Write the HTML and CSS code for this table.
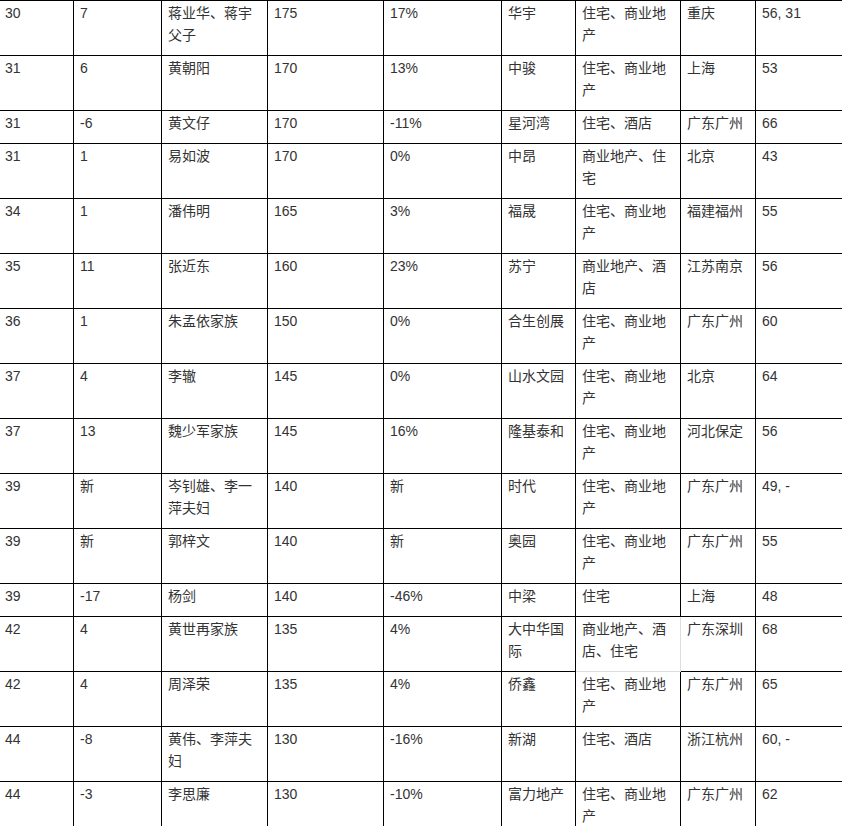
FILE: index.html
```html
<!DOCTYPE html>
<html lang="zh-CN">
<head>
<meta charset="utf-8">
<title>富豪榜</title>
<link rel="stylesheet" href="styles.css">
</head>
<body>
<table class="rank">
<colgroup>
<col class="c1"><col class="c2"><col class="c3"><col class="c4"><col class="c5"><col class="c6"><col class="c7"><col class="c8"><col class="c9">
</colgroup>
<tbody>
<tr><td>30</td><td>7</td><td>蒋业华、蒋宇父子</td><td>175</td><td>17%</td><td>华宇</td><td>住宅、商业地产</td><td>重庆</td><td>56, 31</td></tr>
<tr><td>31</td><td>6</td><td>黄朝阳</td><td>170</td><td>13%</td><td>中骏</td><td>住宅、商业地产</td><td>上海</td><td>53</td></tr>
<tr><td>31</td><td>-6</td><td>黄文仔</td><td>170</td><td>-11%</td><td>星河湾</td><td>住宅、酒店</td><td>广东广州</td><td>66</td></tr>
<tr><td>31</td><td>1</td><td>易如波</td><td>170</td><td>0%</td><td>中昂</td><td>商业地产、住宅</td><td>北京</td><td>43</td></tr>
<tr><td>34</td><td>1</td><td>潘伟明</td><td>165</td><td>3%</td><td>福晟</td><td>住宅、商业地产</td><td>福建福州</td><td>55</td></tr>
<tr><td>35</td><td>11</td><td>张近东</td><td>160</td><td>23%</td><td>苏宁</td><td>商业地产、酒店</td><td>江苏南京</td><td>56</td></tr>
<tr><td>36</td><td>1</td><td>朱孟依家族</td><td>150</td><td>0%</td><td>合生创展</td><td>住宅、商业地产</td><td>广东广州</td><td>60</td></tr>
<tr><td>37</td><td>4</td><td>李辙</td><td>145</td><td>0%</td><td>山水文园</td><td>住宅、商业地产</td><td>北京</td><td>64</td></tr>
<tr><td>37</td><td>13</td><td>魏少军家族</td><td>145</td><td>16%</td><td>隆基泰和</td><td>住宅、商业地产</td><td>河北保定</td><td>56</td></tr>
<tr><td>39</td><td>新</td><td>岑钊雄、李一萍夫妇</td><td>140</td><td>新</td><td>时代</td><td>住宅、商业地产</td><td>广东广州</td><td>49, -</td></tr>
<tr><td>39</td><td>新</td><td>郭梓文</td><td>140</td><td>新</td><td>奥园</td><td>住宅、商业地产</td><td>广东广州</td><td>55</td></tr>
<tr><td>39</td><td>-17</td><td>杨剑</td><td>140</td><td>-46%</td><td>中梁</td><td>住宅</td><td>上海</td><td>48</td></tr>
<tr><td>42</td><td>4</td><td>黄世再家族</td><td>135</td><td>4%</td><td>大中华国际</td><td class="faint">商业地产、酒店、住宅</td><td>广东深圳</td><td>68</td></tr>
<tr><td>42</td><td>4</td><td>周泽荣</td><td>135</td><td>4%</td><td>侨鑫</td><td>住宅、商业地产</td><td>广东广州</td><td>65</td></tr>
<tr><td>44</td><td>-8</td><td>黄伟、李萍夫妇</td><td>130</td><td>-16%</td><td>新湖</td><td>住宅、酒店</td><td>浙江杭州</td><td>60, -</td></tr>
<tr><td>44</td><td>-3</td><td>李思廉</td><td>130</td><td>-10%</td><td>富力地产</td><td>住宅、商业地产</td><td>广东广州</td><td>62</td></tr>
</tbody>
</table>
</body>
</html>
```

FILE: styles.css
```css
html, body {
  margin: 0;
  padding: 0;
  background: #fff;
  overflow: hidden;
}

.rank {
  border-collapse: collapse;
  table-layout: fixed;
  width: 857px;
  margin: 0 0 0 -2px;
  font-family: "Liberation Sans", "Noto Sans CJK SC", sans-serif;
  font-size: 14px;
  color: #333;
}

.rank td {
  border: 1px solid #000;
  padding: 1px 6px 9px 6px;
  line-height: 22px;
  vertical-align: top;
  text-align: left;
  word-break: break-all;
}

.rank td.faint {
  border-right-color: #ddd;
  border-bottom-color: #ddd;
}

.c1 { width: 75px; }
.c2 { width: 88px; }
.c3 { width: 106px; }
.c4 { width: 116px; }
.c5 { width: 118px; }
.c6 { width: 74px; }
.c7 { width: 105px; }
.c8 { width: 75px; }
.c9 { width: 100px; }
```
